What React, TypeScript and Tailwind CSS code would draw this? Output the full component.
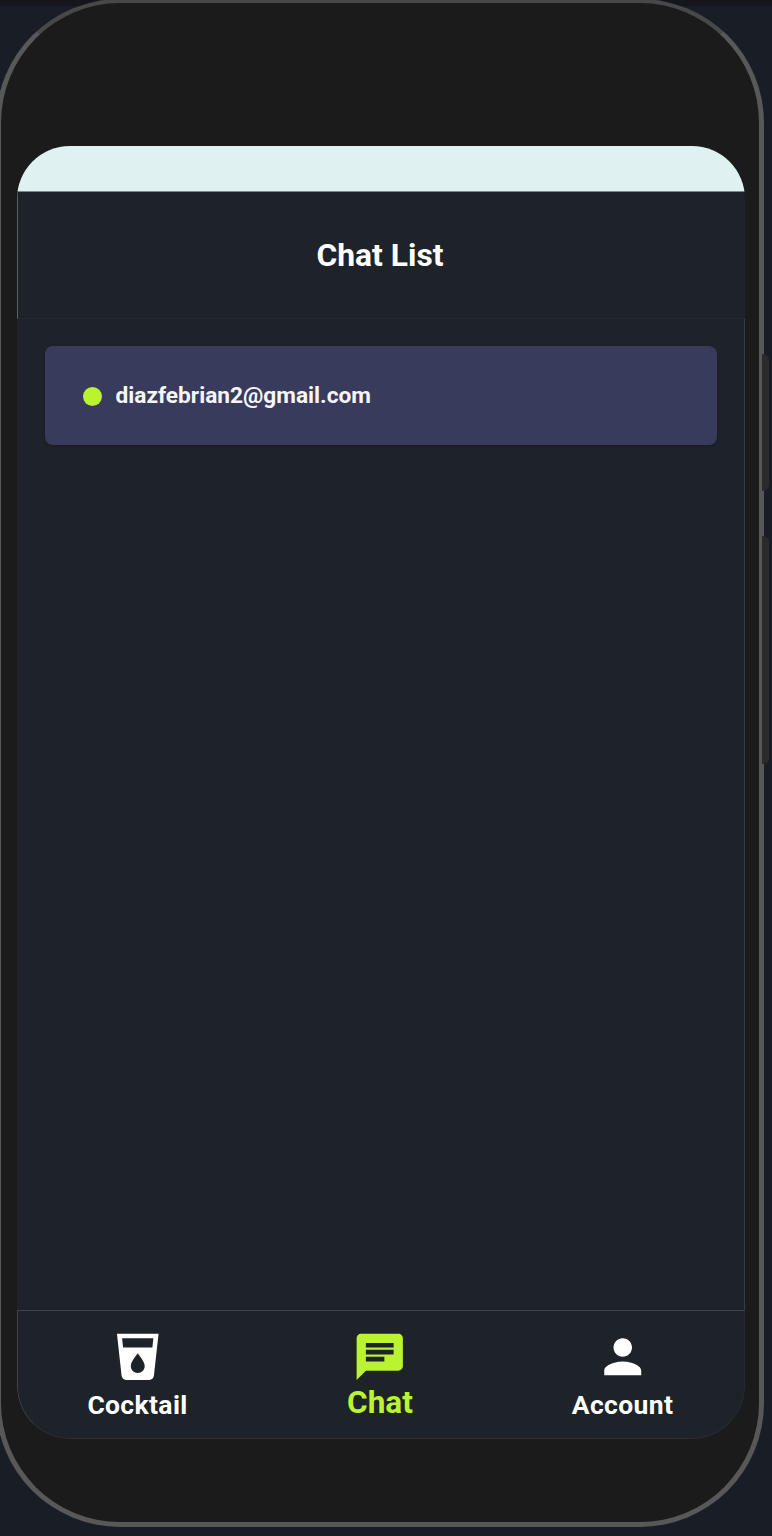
import { MdChat, MdLocalDrink, MdPerson } from "react-icons/md";

const chats = ["diazfebrian2@gmail.com"];

const tabs = [
  { label: "Cocktail", Icon: MdLocalDrink, active: false },
  { label: "Chat", Icon: MdChat, active: true },
  { label: "Account", Icon: MdPerson, active: false },
];

function Header() {
  return (
    <header className="flex h-[128px] shrink-0 items-center justify-center border-y border-l border-t-[#77898c] border-b-[#23282f] border-l-[#566167] bg-[#1e2229] pr-[3px]">
      <h1 className="text-[31.8px] leading-10 font-bold text-white">Chat List</h1>
    </header>
  );
}

function ChatRow({ email }: { email: string }) {
  return (
    <li className="flex h-[99px] items-center rounded-lg bg-[#393b5c] pl-[38px] shadow-[0_1px_3px_rgba(0,0,0,0.2)]">
      <span className="mt-[2px] size-[19px] rounded-full bg-[#b9f331]" />
      <span className="ml-[13.5px] pt-[1px] text-[22.7px] leading-7 font-bold text-[#f6f6fa]">{email}</span>
    </li>
  );
}

function TabBar() {
  return (
    <nav className="grid h-[129px] shrink-0 grid-cols-[239px_246px_239px] rounded-b-[53px] border border-[#3f444b] border-r-[#252b30] border-b-[#2b2e33] bg-[#1e2229]">
      {tabs.map(({ label, Icon, active }) => (
        <a
          key={label}
          className={
            active
              ? "flex flex-col items-center pt-[18px] text-[#b9f331]"
              : "flex flex-col items-center pt-[18px] text-white"
          }
        >
          <Icon className="size-[55.5px] shrink-0" />
          <span
            className={
              active
                ? "text-[31.5px] leading-[36px] font-bold"
                : "pt-[2px] text-[26.5px] leading-9 font-bold tracking-[0.35px]"
            }
          >
            {label}
          </span>
        </a>
      ))}
    </nav>
  );
}

export default function App() {
  return (
    <div className="relative h-[1536px] w-[772px] overflow-hidden bg-[#191d26] font-[Roboto,sans-serif]">
      <div className="absolute inset-x-0 top-0 h-[6px] bg-[#14161b]" />
      <div className="absolute top-[-1px] left-[-4px] flex h-[1528px] w-[768px] rounded-[124px] border-[5px] border-t-[4px] border-[#585858] border-t-[#484848] bg-[#1b1b1b] pt-[143px] pr-[14px] pb-[83px] pl-[16px]">
        <main className="flex flex-1 flex-col overflow-hidden rounded-[53px] bg-[#1e2229]">
          <div className="h-[45px] shrink-0 bg-[#dff1f1]" />
          <Header />
          <ul className="flex flex-1 flex-col border-r border-[#343d41] bg-[#1e2229] px-[28px] pr-[27px] pt-[27px]">
            {chats.map((email) => (
              <ChatRow key={email} email={email} />
            ))}
          </ul>
          <TabBar />
        </main>
      </div>
      <div className="absolute top-[354px] left-[762px] h-[137px] w-[7px] rounded-r-[6px] bg-[#2b2b2b]" />
      <div className="absolute top-[536px] left-[762px] h-[228px] w-[7px] rounded-r-[6px] bg-[#2b2b2b]" />
    </div>
  );
}
